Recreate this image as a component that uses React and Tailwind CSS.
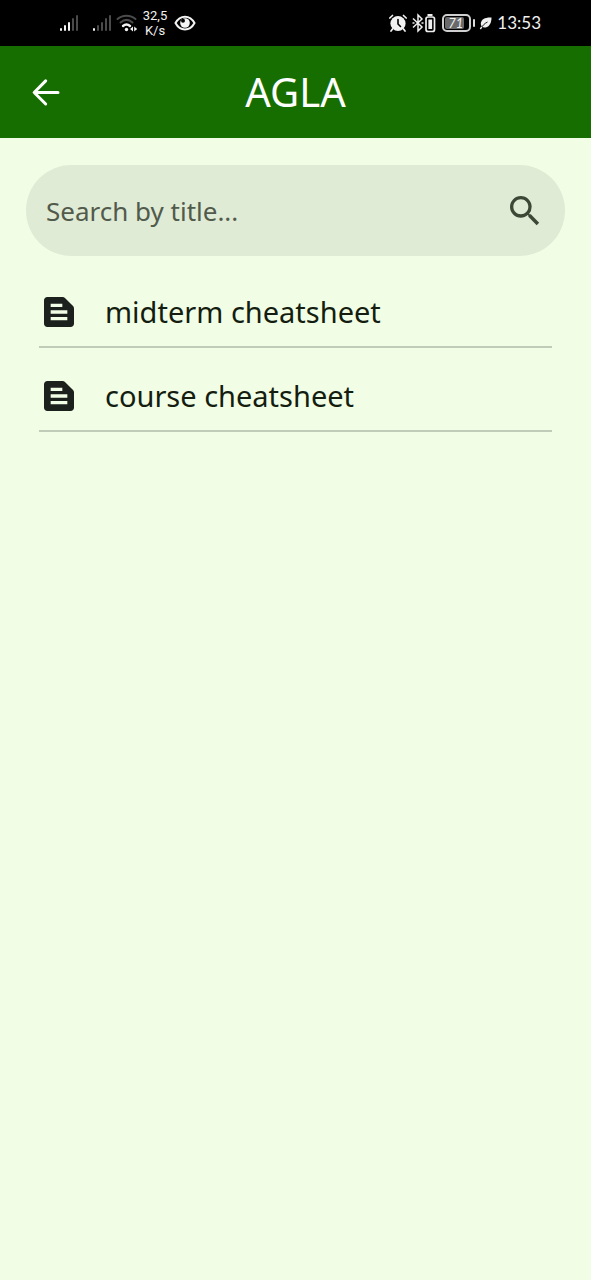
const documents = ["midterm cheatsheet", "course cheatsheet"];

function SignalIcon({ level }) {
  const bars = [
    { x: 1, h: 3 },
    { x: 5, h: 6 },
    { x: 9, h: 9 },
    { x: 13, h: 13 },
    { x: 17, h: 16 },
  ];
  return (
    <svg viewBox="0 0 20 18" className="h-[18px] w-5" aria-hidden="true">
      {bars.map((b, i) => (
        <rect key={b.x} x={b.x} y={17 - b.h} width="2" height={b.h} rx="1" fill={i < level ? "#f4f4f4" : "#4b4b4b"} />
      ))}
    </svg>
  );
}

function WifiIcon() {
  return (
    <svg viewBox="0 0 22 18" className="h-[18px] w-[22px]" fill="none" strokeLinecap="round" aria-hidden="true">
      <path d="M1.500 5C6.500 .5 14.500 .5 19.500 5" stroke="#4b4b4b" strokeWidth="2" />
      <path d="M4.500 8.500C8.500 5 12.500 5 16.500 8.500" stroke="#4b4b4b" strokeWidth="2" />
      <path d="M7 12C9.500 9.800 11.500 9.800 14 12" stroke="#f4f4f4" strokeWidth="2.400" />
      <circle cx="10.500" cy="15.500" r="1.700" fill="#f4f4f4" />
      <path d="M17 12.500v5L14 15zM18.200 12.500v5L21.200 15z" fill="#f4f4f4" />
    </svg>
  );
}

function EyeIcon() {
  return (
    <svg viewBox="0 0 22 16" className="h-4 w-[22px]" fill="none" aria-hidden="true">
      <path d="M1.500 8C6 -.5 16 -.5 20.500 8C16 16.500 6 16.500 1.500 8Z" stroke="#f4f4f4" strokeWidth="2" />
      <circle cx="11" cy="8" r="4.800" fill="#f4f4f4" />
      <circle cx="9" cy="5.800" r="2" fill="#000" />
    </svg>
  );
}

function AlarmIcon() {
  return (
    <svg viewBox="0 0 20 20" className="h-5 w-5" fill="none" strokeLinecap="round" aria-hidden="true">
      <circle cx="10" cy="10.500" r="7.600" fill="#f1f1f1" />
      <path d="M1.800 5L4.500 2.500M18.200 5L15.500 2.500M4.500 16L3 18M15.500 16L17 18" stroke="#f1f1f1" strokeWidth="1.700" />
      <path d="M10 6.500V11l2.500 2.500" stroke="#000" strokeWidth="1.600" />
    </svg>
  );
}

function BluetoothIcon() {
  return (
    <svg viewBox="0 0 12 20" className="h-5 w-3" fill="none" stroke="#eee" strokeWidth="1.500" aria-hidden="true">
      <path d="M1 5.500L10 14L6 18V2L10 6L1 14.500" />
      <path d="M.500 10h2M9.500 10h2" />
    </svg>
  );
}

function DeviceBatteryIcon() {
  return (
    <svg viewBox="0 0 12 20" className="h-5 w-3" aria-hidden="true">
      <rect x="3.500" y="1" width="5" height="2" fill="#eee" />
      <rect x="2" y="4" width="8.500" height="14.500" rx="2" fill="none" stroke="#eee" strokeWidth="1.700" />
      <rect x="4.400" y="6.500" width="3.700" height="9.500" fill="#eee" />
    </svg>
  );
}

function LeafIcon() {
  return (
    <svg viewBox="0 0 14 14" className="h-3.5 w-3.5" aria-hidden="true">
      <path d="M12.500 1.500C7 1 2 3 1.800 7.500C1.700 10.500 4 12 6.500 11.500C11 10.500 12.500 6 12.500 1.500Z" fill="#f1f1f1" />
      <path d="M2 12.500C3.500 9.500 5.500 7.500 8.500 6" stroke="#000" strokeWidth=".9" fill="none" />
      <path d="M1.300 13L2.800 10.800" stroke="#f1f1f1" strokeWidth="1.400" />
    </svg>
  );
}

function StatusBar() {
  return (
    <div className="flex h-[46px] items-center justify-between bg-black pl-[59px] pr-[50px] text-[#f1f1f1]">
      <div className="flex items-center">
        <SignalIcon level={3} />
        <span className="ml-[13px] flex">
          <SignalIcon level={1} />
        </span>
        <span className="ml-1 flex">
          <WifiIcon />
        </span>
        <span className="ml-1 w-[26px] text-center font-['Roboto',sans-serif] text-[13px] leading-[15px]">
          32,5
          <br />
          K/s
        </span>
        <span className="ml-[6px] flex">
          <EyeIcon />
        </span>
      </div>
      <div className="flex items-center">
        <AlarmIcon />
        <span className="ml-1 flex">
          <BluetoothIcon />
          <DeviceBatteryIcon />
        </span>
        <span className="ml-1.5 flex items-center gap-[2px]">
          <span className="flex h-[18px] w-[29px] rounded-[5px] border-2 border-[#cfcfcf] p-px">
            <span className="flex w-[19px] items-center justify-end rounded-[2px] bg-[#6a6a6a] pr-px font-['Lato',sans-serif] text-[13px] italic leading-none">
              71
            </span>
          </span>
          <span className="h-2 w-[2px] rounded-full bg-[#dcdcdc]" />
        </span>
        <span className="ml-1 flex">
          <LeafIcon />
        </span>
        <time className="ml-1 font-['Lato',sans-serif] text-[17px] leading-6">13:53</time>
      </div>
    </div>
  );
}

export default function App() {
  return (
    <div className="min-h-screen bg-[#f1fee5] font-['Noto_Sans',sans-serif]">
      <StatusBar />
      <header className="grid h-[92px] grid-cols-[40px_1fr_40px] items-center bg-[#176e00] px-[26px] text-white">
        <button type="button" aria-label="Back" className="flex">
          <svg viewBox="0 0 24 24" className="h-10 w-10" fill="none" stroke="currentColor" strokeWidth="1.800" strokeLinecap="round" strokeLinejoin="round" aria-hidden="true">
            <path d="M19.200 12.300H5M11.800 5.300L4.900 12.300L11.800 19.200" />
          </svg>
        </button>
        <h1 className="text-center text-[40px] leading-[48px]">AGLA</h1>
      </header>
      <main className="px-[26px] pt-[27px]">
        <label className="flex h-[91px] items-center rounded-full bg-[#dfebd5] px-5">
          <input
            type="text"
            aria-label="Search by title"
            placeholder="Search by title..."
            className="min-w-0 flex-1 bg-transparent text-[26px] leading-9 text-[#42493d] outline-none placeholder:text-[#525a4c]"
          />
          <svg viewBox="0 0 24 24" className="h-10 w-10 shrink-0 fill-[#3c4835]" aria-hidden="true">
            <path d="M15.500 14h-.79l-.28-.27A6.471 6.471 0 0 0 16 9.500 6.500 6.500 0 1 0 9.500 16c1.610 0 3.090-.59 4.230-1.570l.27.28v.79l5 4.990L20.490 19l-4.990-5zm-6 0C7.010 14 5 11.990 5 9.500S7.010 5 9.500 5 14 7.010 14 9.500 11.990 14 9.500 14z" />
          </svg>
        </label>
        <ul className="px-[13px] pt-2">
          {documents.map((title) => (
            <li key={title} className="border-b-2 border-[#c0cbb8]">
              <a href="#" className="flex items-center gap-[26px] pb-[14px] pt-7">
                <svg viewBox="0 0 24 24" className="h-10 w-10 shrink-0 fill-[#1c211e]" aria-hidden="true">
                  <path d="M20.410 8.410l-4.830-4.830C15.210 3.210 14.700 3 14.170 3H5C3.900 3 3 3.900 3 5v14c0 1.100.9 2 2 2h14c1.100 0 2-.9 2-2V9.830c0-.53-.21-1.040-.59-1.420zM7 7h7v2H7V7zm10 10H7v-2h10v2zm0-4H7v-2h10v2z" />
                </svg>
                <span className="text-[29px] leading-10 text-[#141d10]">{title}</span>
              </a>
            </li>
          ))}
        </ul>
      </main>
    </div>
  );
}
